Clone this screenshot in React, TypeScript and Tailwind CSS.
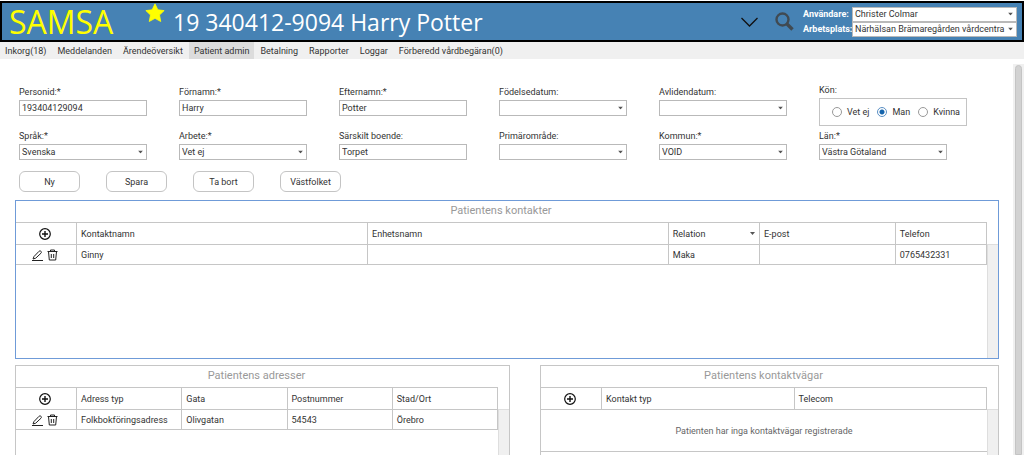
import { useId, useState, type ReactNode } from 'react';
import { clsx } from 'clsx';

const tabs = [
    'Inkorg(18)',
    'Meddelanden',
    'Ärendeöversikt',
    'Patient admin',
    'Betalning',
    'Rapporter',
    'Loggar',
    'Förberedd vårdbegäran(0)',
];

const actions = ['Ny', 'Spara', 'Ta bort', 'Västfolket'];

interface FieldData {
    label: string;
    value: string;
    select?: boolean;
}

const firstRow: FieldData[] = [
    { label: 'Personid:*', value: '193404129094' },
    { label: 'Förnamn:*', value: 'Harry' },
    { label: 'Efternamn:*', value: 'Potter' },
    { label: 'Födelsedatum:', value: '', select: true },
    { label: 'Avlidendatum:', value: '', select: true },
];

const secondRow: FieldData[] = [
    { label: 'Språk:*', value: 'Svenska', select: true },
    { label: 'Arbete:*', value: 'Vet ej', select: true },
    { label: 'Särskilt boende:', value: 'Torpet' },
    { label: 'Primärområde:', value: '', select: true },
    { label: 'Kommun:*', value: 'VOID', select: true },
    { label: 'Län:*', value: 'Västra Götaland', select: true },
];

const Caret = ({ className }: { className?: string }) => (
    <svg viewBox="0 0 5 3" className={clsx('h-[3px] w-[5px] fill-[#555]', className)}>
        <path d="M0 0h5L2.5 3z" />
    </svg>
);

const PlusIcon = () => (
    <svg viewBox="0 0 12 12" className="h-3 w-3 fill-none stroke-[#111]" strokeWidth="1.2">
        <circle cx="6" cy="6" r="5.3" />
        <path d="M6 3v6M3 6h6" strokeWidth="1.4" />
    </svg>
);

const PencilIcon = () => (
    <svg viewBox="0 0 11 11" className="h-[11px] w-[11px] fill-none stroke-[#222]" strokeWidth="1">
        <path d="M1 9l1-2.500L7 1.300c.7-.6 1.500-.4 2 0s.6 1.200 0 1.900L3.700 8.200 1 9z" />
        <path d="M0 10.500h11" />
    </svg>
);

const TrashIcon = () => (
    <svg viewBox="0 0 11 12" className="h-3 w-[11px] fill-none stroke-[#222]" strokeWidth="1">
        <path d="M.5 2.500h10M3.500 2.500v-1.500h4v1.500M1.500 2.500l.8 8.500h6.400l.8-8.500" />
        <path d="M4.300 5v4M6.700 5v4" />
    </svg>
);

const SelectBox = ({ id, value, className }: { id: string; value: string; className?: string }) => (
    <div className={clsx('relative', className)}>
        <select
            id={id}
            defaultValue={value}
            className="block h-full w-full appearance-none border border-[#b9b9b9] bg-white pr-2 pl-[2px] outline-none"
        >
            <option>{value}</option>
        </select>
        <Caret className="pointer-events-none absolute top-1/2 right-1 -translate-y-1/2" />
    </div>
);

const Field = ({ label, value, select }: FieldData) => {
    const id = useId();
    return (
        <div className="flex w-4/5 flex-col gap-[2px]">
            <label htmlFor={id} className="leading-3">{label}</label>
            {select ? (
                <SelectBox id={id} value={value} className="h-4" />
            ) : (
                <input id={id} defaultValue={value} className="h-4 w-full border border-[#b9b9b9] bg-white px-[2px] outline-none" />
            )}
        </div>
    );
};

const GenderField = () => {
    const [gender, setGender] = useState('Man');
    return (
        <fieldset className="-mt-[2px] w-[148px]">
            <legend className="leading-3">Kön:</legend>
            <div className="mt-[2px] flex h-7 items-center gap-2 border border-[#c4c4c4] pl-3">
                {['Vet ej', 'Man', 'Kvinna'].map((option) => (
                    <label key={option} className="flex items-center gap-[5px] whitespace-nowrap">
                        <input
                            type="radio"
                            name="gender"
                            checked={gender === option}
                            onChange={() => setGender(option)}
                            className="h-[10px] w-[10px] appearance-none rounded-full border border-[#999] bg-white checked:border-[#5a8fc4] checked:bg-[radial-gradient(circle,#1464ac_2px,white_3px)]"
                        />
                        {option}
                    </label>
                ))}
            </div>
        </fieldset>
    );
};

interface Column {
    title: string;
    width?: string;
    sortable?: boolean;
}

interface PanelProps {
    title: string;
    columns: Column[];
    rows: string[][];
    active?: boolean;
    empty?: ReactNode;
}

const Panel = ({ title, columns, rows, active, empty }: PanelProps) => (
    <section className={clsx('flex h-[159px] flex-col border', active ? 'border-[#6f9bd8]' : 'border-[#c6c6c6]')}>
        <h2 className="h-[21px] pr-3 text-center text-[11px] leading-5 text-[#999]">{title}</h2>
        <div className="flex flex-1">
            <div className="min-w-0 flex-1">
                <table className="w-full table-fixed border-separate border-spacing-0 border-t border-[#c6c6c6] text-left">
                    <thead>
                        <tr className="h-[22px]">
                            <th className="w-[61px] border-r border-b border-[#c6c6c6] pr-[2px]">
                                <button aria-label="Lägg till" className="mx-auto block"><PlusIcon /></button>
                            </th>
                            {columns.map((column) => (
                                <th key={column.title} className={clsx('border-r border-b border-[#c6c6c6] px-1 font-normal', column.width)}>
                                    <div className="flex items-center justify-between">
                                        {column.title}
                                        {column.sortable && <Caret />}
                                    </div>
                                </th>
                            ))}
                        </tr>
                    </thead>
                    <tbody>
                        {rows.map((row) => (
                            <tr key={row[0]} className="h-5">
                                <td className="border-r border-b border-[#c6c6c6] pr-[2px]">
                                    <div className="flex items-center justify-center gap-1 pt-px">
                                        <button aria-label="Redigera"><PencilIcon /></button>
                                        <button aria-label="Ta bort"><TrashIcon /></button>
                                    </div>
                                </td>
                                {row.map((cell, i) => (
                                    <td key={i} className="border-r border-b border-[#c6c6c6] px-1">{cell}</td>
                                ))}
                            </tr>
                        ))}
                        {empty && (
                            <tr className="h-[42px]">
                                <td colSpan={columns.length + 1} className="border-b border-[#c6c6c6] text-center text-[#666]">{empty}</td>
                            </tr>
                        )}
                    </tbody>
                </table>
            </div>
            <div className="mt-[22px] w-[11px] border-t border-l border-[#dedede] bg-[#f0f0f0]" />
        </div>
    </section>
);

export default function App() {
    const [activeTab, setActiveTab] = useState('Patient admin');

    return (
        <div className="flex h-screen flex-col overflow-hidden bg-white font-[Roboto,sans-serif] text-[9px] leading-3 text-[#333]">
            <header className="mt-px flex h-[41px] shrink-0 items-center border-2 border-black bg-[#4682b4] font-['Open_Sans',sans-serif]">
                <div className="w-[143px] pl-[7px] text-[32px] leading-9 text-[#ffff00]">SAMSA</div>
                <svg viewBox="0 0 24 24" className="mb-[18px] h-5 w-5 fill-[#ffff00] stroke-[#ffff00]">
                    <path d="M12 1l3.400 7.200 7.600.9-5.600 5.300 1.500 7.800L12 18.400l-6.900 3.800 1.500-7.800L1 9.100l7.600-.9z" />
                </svg>
                <h1 className="ml-2 flex-1 text-[23px] leading-8 whitespace-nowrap text-white">19 340412-9094 Harry Potter</h1>
                <button aria-label="Visa mer" className="mr-[17px]">
                    <svg viewBox="0 0 17 10" className="h-[10px] w-[17px] fill-none stroke-[#111]" strokeWidth="1.300">
                        <path d="M.5 1l8 8 8-8" />
                    </svg>
                </button>
                <button aria-label="Sök" className="mr-[9px]">
                    <svg viewBox="0 0 19 19" className="h-[19px] w-[19px] fill-none stroke-[#404a52]">
                        <circle cx="7.500" cy="7.500" r="6" strokeWidth="2.400" />
                        <path d="M12 12l5.500 5.500" strokeWidth="3.400" />
                    </svg>
                </button>
                <div className="grid grid-cols-[49px_165px] items-center font-[Roboto,sans-serif] font-bold">
                    <label htmlFor="user" className="text-white">Användare:</label>
                    <SelectBox id="user" value="Christer Colmar" className="h-[15px] font-normal" />
                    <label htmlFor="workplace" className="text-white">Arbetsplats:</label>
                    <SelectBox id="workplace" value="Närhälsan Brämaregården vårdcentra" className="h-[15px] font-normal" />
                </div>
                <div className="w-[5px]" />
            </header>

            <nav className="flex h-[17px] shrink-0 gap-px bg-[#f0f0f0]">
                {tabs.map((tab) => (
                    <button
                        key={tab}
                        onClick={() => setActiveTab(tab)}
                        className={clsx('px-[5px] whitespace-nowrap', activeTab === tab && 'bg-[#dcdcdc]')}
                    >
                        {tab}
                    </button>
                ))}
            </nav>

            <div className="flex min-h-0 flex-1">
                <main className="min-w-0 flex-1 overflow-hidden pt-[27px] pr-[14px] pl-[15px]">
                    <form className="pr-5 pl-1" onSubmit={(e) => e.preventDefault()}>
                        <div className="grid h-11 grid-cols-6">
                            {firstRow.map((field) => <Field key={field.label} {...field} />)}
                            <GenderField />
                        </div>
                        <div className="grid grid-cols-6">
                            {secondRow.map((field) => <Field key={field.label} {...field} />)}
                        </div>
                        <div className="mt-[11px] flex gap-[26px]">
                            {actions.map((action) => (
                                <button key={action} className="h-[21px] w-[61px] rounded-md border border-[#c4c4c4] bg-white">{action}</button>
                            ))}
                        </div>
                    </form>

                    <div className="mt-2">
                        <Panel
                            active
                            title="Patientens kontakter"
                            columns={[
                                { title: 'Kontaktnamn', width: 'w-[30%]' },
                                { title: 'Enhetsnamn', width: 'w-[31%]' },
                                { title: 'Relation', width: 'w-[9.4%]', sortable: true },
                                { title: 'E-post', width: 'w-[14%]' },
                                { title: 'Telefon', width: 'w-[9.4%]' },
                            ]}
                            rows={[['Ginny', '', 'Maka', '', '0765432331']]}
                        />
                    </div>
                    <div className="mt-[6px] grid grid-cols-[495fr_459fr] gap-[30px]">
                        <Panel
                            title="Patientens adresser"
                            columns={[
                                { title: 'Adress typ' },
                                { title: 'Gata' },
                                { title: 'Postnummer' },
                                { title: 'Stad/Ort' },
                            ]}
                            rows={[['Folkbokföringsadress', 'Olivgatan', '54543', 'Örebro']]}
                        />
                        <Panel
                            title="Patientens kontaktvägar"
                            columns={[{ title: 'Kontakt typ' }, { title: 'Telecom' }]}
                            rows={[]}
                            empty="Patienten har inga kontaktvägar registrerade"
                        />
                    </div>
                </main>
                {/* page scrollbar */}
                <div className="mt-[5px] flex w-[11px] shrink-0 bg-[#f0f0f0] px-[2px] pt-px">
                    <div className="flex-1 rounded-t-sm border border-[#c4c4c4] bg-[#d2d2d2]" />
                </div>
            </div>
        </div>
    );
}
